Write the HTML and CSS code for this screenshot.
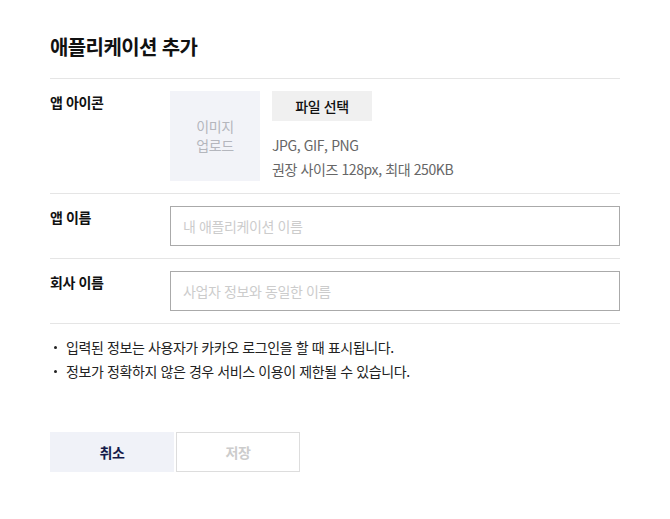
FILE: index.html
```html
<!DOCTYPE html>
<html lang="ko">
<head>
<meta charset="utf-8">
<link rel="stylesheet" href="styles.css">
</head>
<body>
<div class="page">
  <h1 class="title">애플리케이션 추가</h1>
  <div class="form">
    <div class="row">
      <div class="label">앱 아이콘</div>
      <div class="field icon-field">
        <div class="icon-box">이미지<br>업로드</div>
        <div class="icon-info">
          <button class="file-btn" type="button">파일 선택</button>
          <div class="hint">JPG, GIF, PNG</div>
          <div class="hint">권장 사이즈 128px, 최대 250KB</div>
        </div>
      </div>
    </div>
    <div class="row">
      <div class="label">앱 이름</div>
      <div class="field"><input class="text-input" type="text" placeholder="내 애플리케이션 이름"></div>
    </div>
    <div class="row">
      <div class="label">회사 이름</div>
      <div class="field"><input class="text-input" type="text" placeholder="사업자 정보와 동일한 이름"></div>
    </div>
  </div>
  <ul class="notes">
    <li>입력된 정보는 사용자가 카카오 로그인을 할 때 표시됩니다.</li>
    <li>정보가 정확하지 않은 경우 서비스 이용이 제한될 수 있습니다.</li>
  </ul>
  <div class="actions">
    <button class="btn btn-cancel" type="button">취소</button>
    <button class="btn btn-save" type="button">저장</button>
  </div>
</div>
</body>
</html>
```

FILE: styles.css
```css
* { box-sizing: border-box; }
html, body { margin: 0; padding: 0; background: #fff; }
body {
  font-family: "Noto Sans CJK KR", "Noto Sans", sans-serif;
  color: #222;
  font-size: 14px;
  letter-spacing: -0.4px;
}
.page {
  width: 570px;
  margin-left: 50px;
  padding-top: 32px;
}
.title {
  margin: 0;
  font-size: 20px;
  font-weight: 700;
  line-height: 30px;
  letter-spacing: -0.6px;
  color: #111;
  padding-bottom: 16px;
  border-bottom: 1px solid #e5e5e5;
}
.row {
  display: flex;
  padding: 12px 0;
  border-bottom: 1px solid #e5e5e5;
}
.label {
  width: 120px;
  font-weight: 700;
  font-size: 14px;
  line-height: 22px;
  color: #111;
}
.field { flex: 1; display: flex; }
.icon-box {
  width: 90px;
  height: 90px;
  background: #f2f3f8;
  color: #b4b6bd;
  font-size: 14px;
  line-height: 19px;
  display: flex;
  align-items: center;
  justify-content: center;
  text-align: center;
}
.icon-info {
  margin-left: 12px;
  display: flex;
  flex-direction: column;
  align-items: flex-start;
}
.file-btn {
  width: 100px;
  height: 30px;
  border: 0;
  background: #f0f0f0;
  font-family: inherit;
  font-size: 14px;
  font-weight: 500;
  letter-spacing: -0.4px;
  color: #111;
  padding: 0;
  margin-bottom: 12px;
}
.hint {
  color: #666;
  font-size: 14px;
  line-height: 24px;
}
.text-input {
  width: 100%;
  height: 40px;
  border: 1px solid #aaa;
  border-radius: 0;
  padding: 0 12px;
  font-family: inherit;
  font-size: 14px;
  letter-spacing: -0.4px;
  color: #222;
  outline: none;
}
.text-input::placeholder { color: #ccc; }
.notes {
  list-style: none;
  margin: 0;
  padding: 11px 0 0 4px;
}
.notes li {
  position: relative;
  padding-left: 12px;
  line-height: 24px;
  color: #222;
  font-size: 14px;
}
.notes li::before {
  content: "";
  position: absolute;
  left: 0;
  top: 11px;
  width: 3px;
  height: 3px;
  border-radius: 50%;
  background: #222;
}
.actions {
  display: flex;
  gap: 2px;
  margin-top: 49px;
}
.btn {
  width: 124px;
  height: 40px;
  font-family: inherit;
  font-size: 14px;
  font-weight: 700;
  letter-spacing: -0.4px;
  padding: 0;
}
.btn-cancel {
  background: #f0f2f8;
  border: 0;
  color: #141a4a;
}
.btn-save {
  background: #fff;
  border: 1px solid #ddd;
  color: #ccc;
}
```
